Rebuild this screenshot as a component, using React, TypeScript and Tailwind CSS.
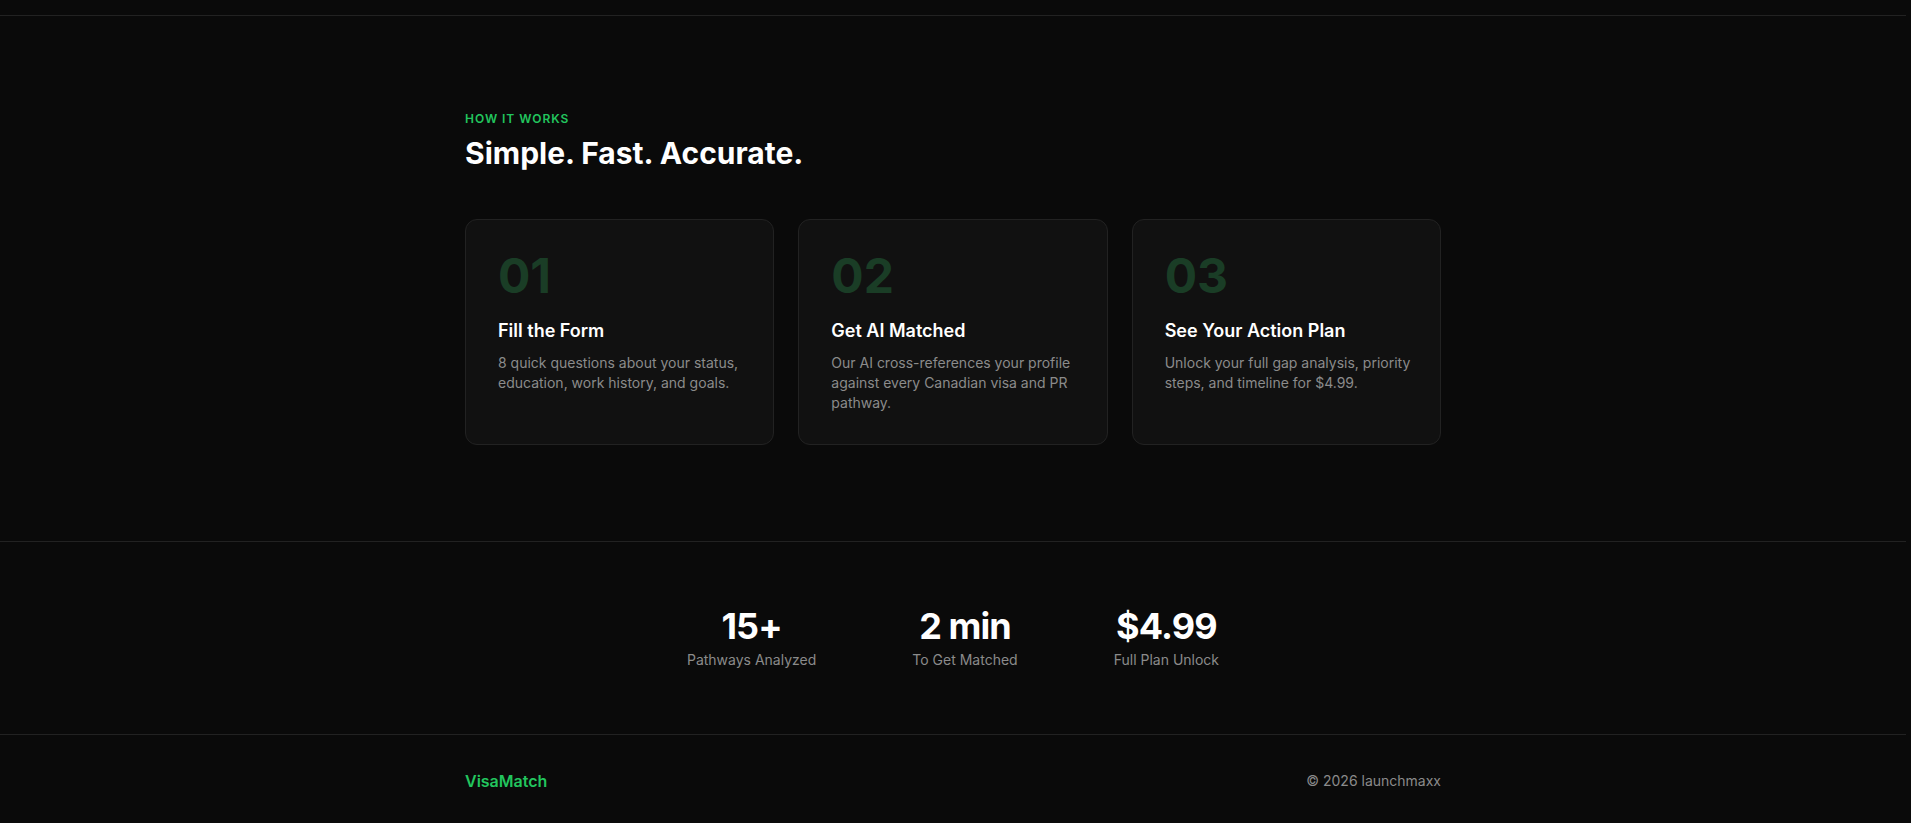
import { useLayoutEffect } from "react";

const steps = [
  {
    num: "01",
    title: "Fill the Form",
    text: "8 quick questions about your status, education, work history, and goals.",
  },
  {
    num: "02",
    title: "Get AI Matched",
    text: "Our AI cross-references your profile against every Canadian visa and PR pathway.",
  },
  {
    num: "03",
    title: "See Your Action Plan",
    text: "Unlock your full gap analysis, priority steps, and timeline for $4.99.",
  },
];

const stats = [
  { value: "15+", label: "Pathways Analyzed" },
  { value: "2 min", label: "To Get Matched" },
  { value: "$4.99", label: "Full Plan Unlock" },
];

export default function App() {
  // page is shown scrolled to the bottom
  useLayoutEffect(() => {
    document.documentElement.classList.add("bg-[#0a0a0a]", "[color-scheme:dark]");
    window.scrollTo(0, document.documentElement.scrollHeight);
  }, []);

  return (
    <div className="min-h-screen bg-[#0a0a0a] text-white pr-[5px] font-['Inter',sans-serif]">
      {/* Hero (above the fold in the shot) */}
      <section className="h-[329px] border-b border-[#222222] flex flex-col">
        <nav className="max-w-[976px] w-full mx-auto flex items-center justify-between h-16">
          <span className="text-[#22c55e] font-semibold text-base">VisaMatch</span>
          <span className="text-sm text-[#8a8a8a]">Get started</span>
        </nav>
        <div className="max-w-[976px] w-full mx-auto flex-1 flex flex-col justify-center">
          <h1 className="text-5xl font-bold tracking-tight">Find your path to Canada.</h1>
          <p className="mt-4 text-lg text-[#8a8a8a]">AI-matched visa and PR pathways in minutes.</p>
        </div>
      </section>

      {/* How it works */}
      <section className="pt-[95px] pb-24 border-b border-[#222222]">
        <div className="max-w-[976px] mx-auto">
          <p className="text-xs font-semibold tracking-[0.08em] uppercase text-[#22c55e]">How it works</p>
          <h2 className="mt-2 text-3xl font-bold">Simple. Fast. Accurate.</h2>

          <div className="mt-12 grid grid-cols-3 gap-6">
            {steps.map((s) => (
              <div
                key={s.num}
                className="h-[226px] rounded-xl border border-[#222222] bg-[#111111] pl-8 pr-6 pt-8"
              >
                <div className="text-5xl leading-none font-bold text-[#1a3d26]">{s.num}</div>
                <h3 className="mt-[17px] text-lg font-semibold">{s.title}</h3>
                <p className="mt-2 text-sm leading-5 text-[#8b8b8b]">{s.text}</p>
              </div>
            ))}
          </div>
        </div>
      </section>

      {/* Stats */}
      <section className="py-16 border-b border-[#222222]">
        <div className="flex justify-center gap-24">
          {stats.map((s) => (
            <div key={s.label} className="flex flex-col items-center">
              <div className="text-4xl font-bold tracking-tight">{s.value}</div>
              <div className="mt-1 text-sm text-[#8b8b8b]">{s.label}</div>
            </div>
          ))}
        </div>
      </section>

      {/* Footer */}
      <footer className="pt-[34px] pb-[30px]">
        <div className="max-w-[976px] mx-auto flex items-center justify-between">
          <span className="text-base font-semibold text-[#22c55e]">VisaMatch</span>
          <span className="text-sm text-[#8b8b8b]">© 2026 launchmaxx</span>
        </div>
      </footer>
    </div>
  );
}
